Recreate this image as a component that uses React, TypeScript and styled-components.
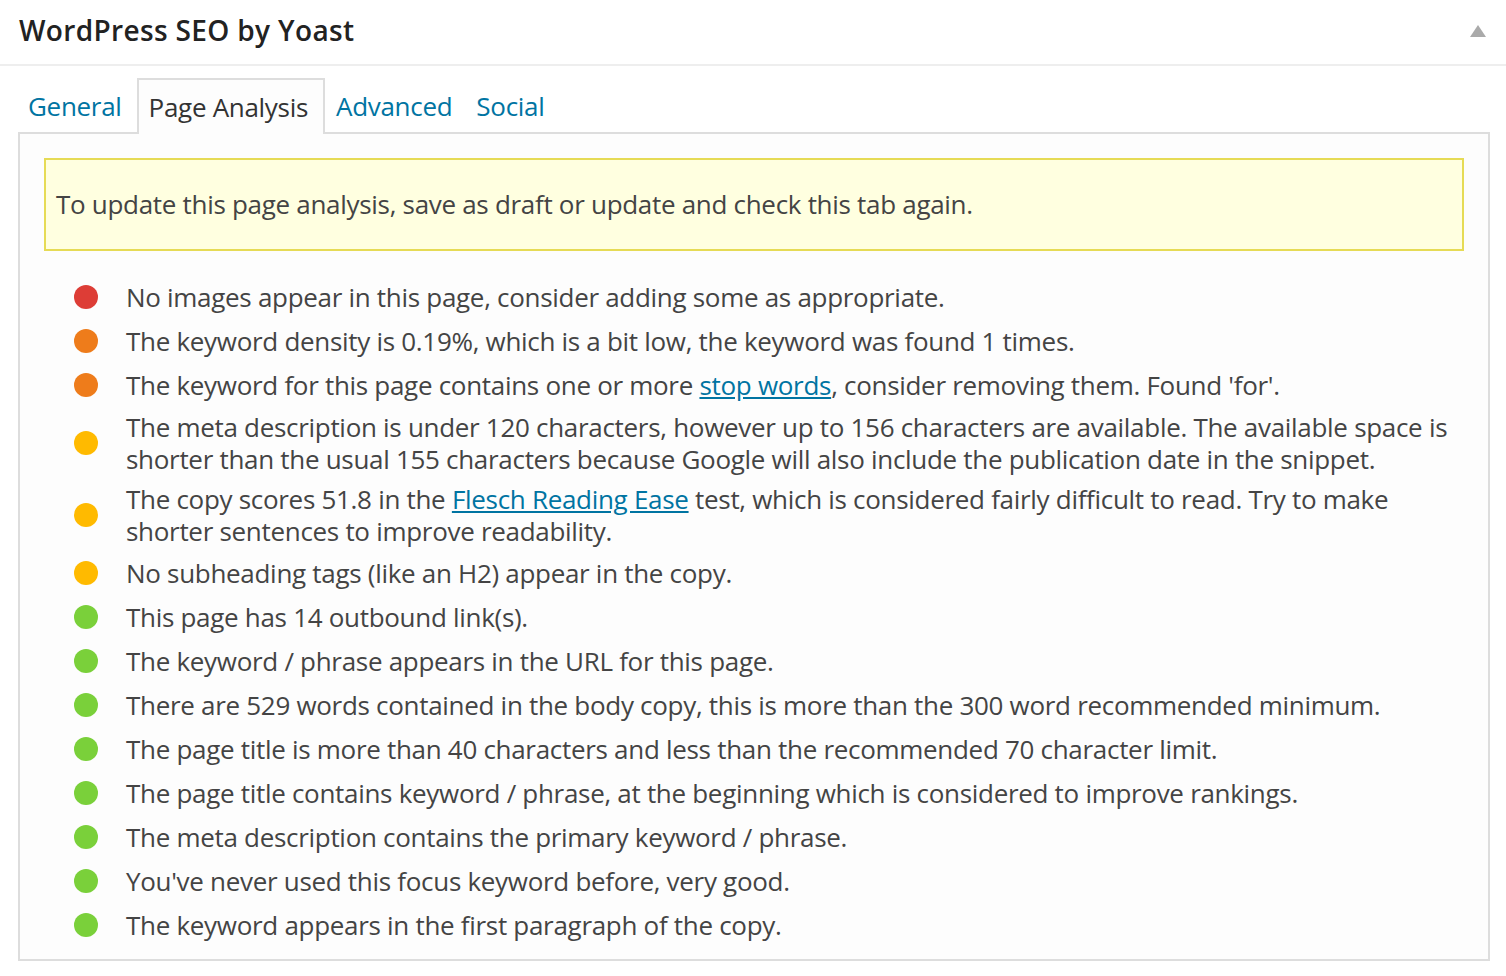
import styled, { createGlobalStyle } from "styled-components";

const GlobalStyle = createGlobalStyle`
  html, body {
    margin: 0;
    padding: 0;
    background: #ffffff;
  }
  body {
    font-family: "Open Sans", "Noto Sans", sans-serif;
    color: #444444;
  }
`;

const Box = styled.div`
  width: 1506px;
  height: 976px;
  background: #ffffff;
  overflow: hidden;
`;

const Header = styled.div`
  display: flex;
  align-items: center;
  justify-content: space-between;
  height: 59px;
  padding: 0 20px 5px 19px;
  border-bottom: 2px solid #eeeeee;
`;

const Title = styled.h3`
  margin: 0;
  font-size: 28px;
  font-weight: 600;
  color: #222222;
  letter-spacing: 0.35px;
`;

const Toggle = styled.span`
  width: 0;
  height: 0;
  border-left: 8px solid transparent;
  border-right: 8px solid transparent;
  border-bottom: 12px solid #aaaaaa;
  margin-top: 2px;
`;

const Inside = styled.div`
  padding: 12px 16px 0 18px;
`;

const TabBar = styled.ul`
  display: flex;
  gap: 6px;
  margin: 0 0 -2px 0;
  padding: 0 0 0 1px;
  list-style: none;
  position: relative;
  z-index: 1;
`;

const Tab = styled.li<{ $active?: boolean }>`
  height: 56px;
  box-sizing: border-box;
  display: flex;
  align-items: center;
  padding: ${(p) => (p.$active ? "0 15px 0 10px" : "0 9px")};
  margin-right: ${(p) => (p.$active ? "-4px" : "0")};
  font-size: 26px;
  letter-spacing: -0.3px;
  border: 2px solid ${(p) => (p.$active ? "#dddddd" : "transparent")};
  border-width: ${(p) => (p.$active ? "2px 2px 0 2px" : "0")};
  background: ${(p) => (p.$active ? "#fdfdfd" : "transparent")};
  color: ${(p) => (p.$active ? "#333333" : "#0074a2")};
`;

const Panel = styled.div`
  border: 2px solid #dddddd;
  background: #fdfdfd;
  padding: 24px 24px 12px 24px;
`;

const Notice = styled.div`
  border: 2px solid #e6db55;
  background: #ffffe0;
  padding: 28px 10px 29px 10px;
  font-size: 26px;
  line-height: 32px;
  letter-spacing: -0.3px;
  color: #444444;
`;

const List = styled.div`
  margin-top: 24px;
  display: flex;
  flex-direction: column;
`;

const Row = styled.div`
  display: flex;
  align-items: center;
  min-height: 44px;
`;

const Dot = styled.span<{ $color: string }>`
  flex: none;
  width: 24px;
  height: 24px;
  border-radius: 50%;
  background: ${(p) => p.$color};
  margin: 0 28px 0 30px;
`;

const Text = styled.div`
  padding: 4px 0;
  font-size: 26px;
  line-height: 32px;
  letter-spacing: -0.3px;
  color: #444444;
`;

const A = styled.a`
  color: #0074a2;
  text-decoration: underline;
`;

const colors = {
  bad: "#dd3d36",
  poor: "#ee7c1b",
  ok: "#ffba00",
  good: "#7ad03a",
};

type Item = { score: keyof typeof colors; text: React.ReactNode };

const items: Item[] = [
  { score: "bad", text: "No images appear in this page, consider adding some as appropriate." },
  { score: "poor", text: "The keyword density is 0.19%, which is a bit low, the keyword was found 1 times." },
  {
    score: "poor",
    text: (
      <>
        The keyword for this page contains one or more <A href="#">stop words</A>, consider removing them. Found
        'for'.
      </>
    ),
  },
  {
    score: "ok",
    text: "The meta description is under 120 characters, however up to 156 characters are available. The available space is shorter than the usual 155 characters because Google will also include the publication date in the snippet.",
  },
  {
    score: "ok",
    text: (
      <>
        The copy scores 51.8 in the <A href="#">Flesch Reading Ease</A> test, which is considered fairly difficult to
        read. Try to make shorter sentences to improve readability.
      </>
    ),
  },
  { score: "ok", text: "No subheading tags (like an H2) appear in the copy." },
  { score: "good", text: "This page has 14 outbound link(s)." },
  { score: "good", text: "The keyword / phrase appears in the URL for this page." },
  {
    score: "good",
    text: "There are 529 words contained in the body copy, this is more than the 300 word recommended minimum.",
  },
  {
    score: "good",
    text: "The page title is more than 40 characters and less than the recommended 70 character limit.",
  },
  {
    score: "good",
    text: "The page title contains keyword / phrase, at the beginning which is considered to improve rankings.",
  },
  { score: "good", text: "The meta description contains the primary keyword / phrase." },
  { score: "good", text: "You've never used this focus keyword before, very good." },
  { score: "good", text: "The keyword appears in the first paragraph of the copy." },
];

export default function App() {
  return (
    <Box>
      <GlobalStyle />
      <Header>
        <Title>WordPress SEO by Yoast</Title>
        <Toggle />
      </Header>
      <Inside>
        <TabBar>
          <Tab>General</Tab>
          <Tab $active>Page Analysis</Tab>
          <Tab>Advanced</Tab>
          <Tab>Social</Tab>
        </TabBar>
        <Panel>
          <Notice>To update this page analysis, save as draft or update and check this tab again.</Notice>
          <List>
            {items.map((item, i) => (
              <Row key={i}>
                <Dot $color={colors[item.score]} />
                <Text>{item.text}</Text>
              </Row>
            ))}
          </List>
        </Panel>
      </Inside>
    </Box>
  );
}
